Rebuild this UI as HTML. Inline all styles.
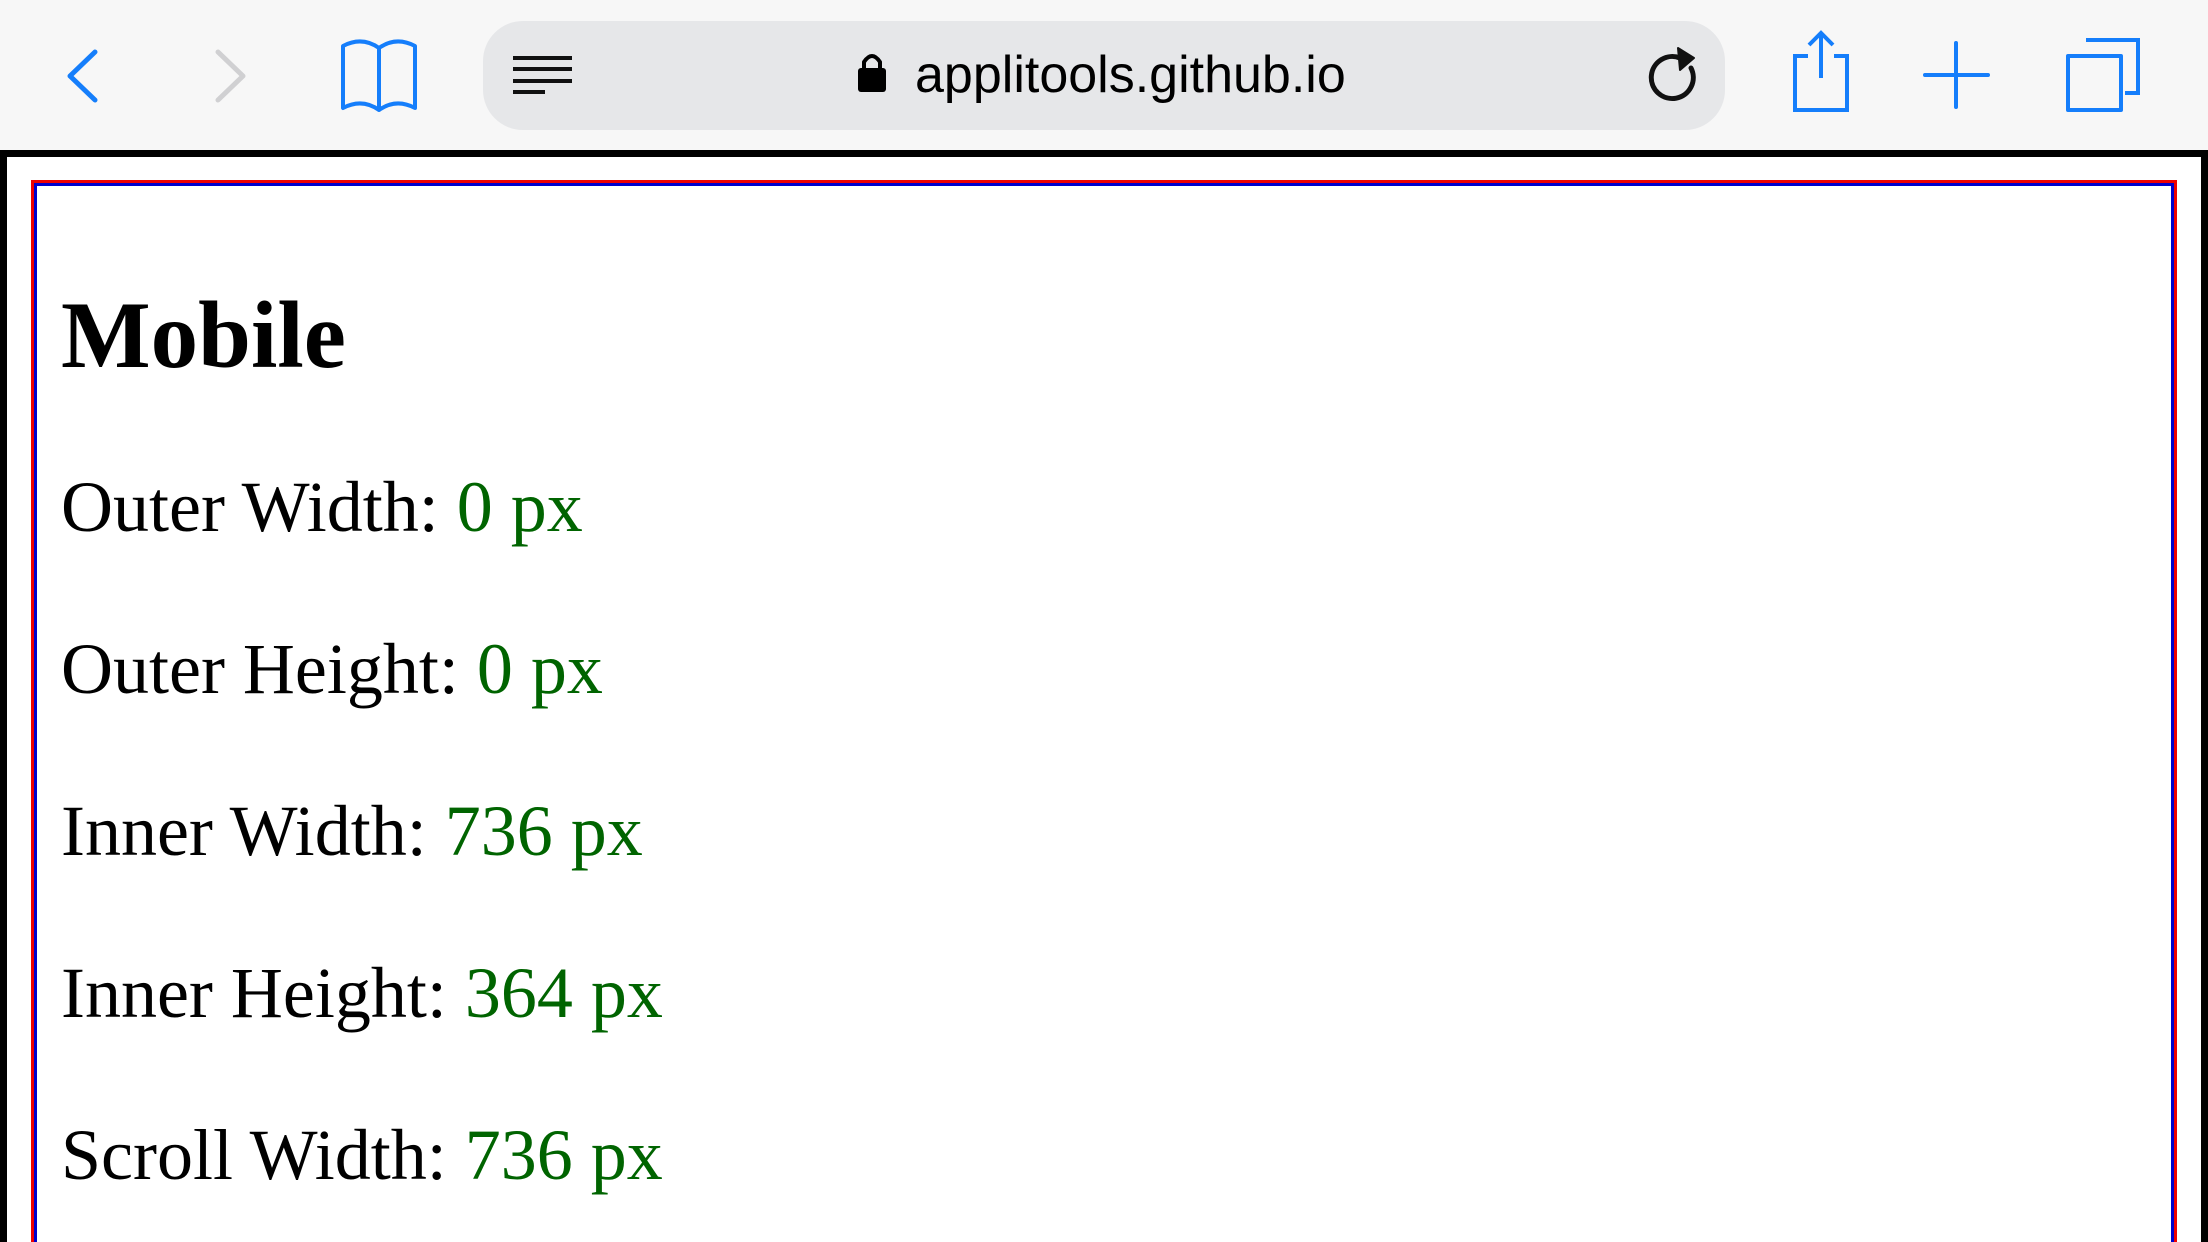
<!DOCTYPE html>
<html><head><meta charset="utf-8"><style>
html,body{margin:0;padding:0;width:2208px;height:1242px;overflow:hidden;background:#fff;position:relative}
.bar{position:absolute;left:0;top:0;width:2208px;height:150px;background:#f7f7f7}
.url{position:absolute;left:483px;top:21px;width:1242px;height:109px;border-radius:40px;background:#e6e7e9}
.frame{position:absolute;left:0;top:150px;width:2194px;height:1100px;border:7px solid #000;border-bottom:none}
.red{position:absolute;left:31px;top:180px;width:2140px;height:1100px;border:3px solid #e00;border-bottom:none}
.blue{position:absolute;left:34px;top:183px;width:2134px;height:1100px;border:3px solid #00c;border-bottom:none}
.t{position:absolute;left:61px;font-family:"Liberation Serif",serif;white-space:nowrap;line-height:1}
.h{font-weight:bold;font-size:95px}
.p{font-size:72px}
.g{color:#006400}
.u{position:absolute;left:915px;top:49px;font-family:"Liberation Sans",sans-serif;font-size:52px;color:#000;line-height:1}
</style></head><body>
<div class="bar"></div>
<div class="url"></div>
<svg width="2208" height="150" style="position:absolute;left:0;top:0" fill="none" stroke-linecap="round" stroke-linejoin="round">
<path d="M95 52 L70 76 L95 100" stroke="#157efb" stroke-width="5"/>
<path d="M218 52 L243 76 L218 100" stroke="#d0d0d2" stroke-width="5"/>
<path d="M343 46 Q362 36 379 48 Q396 36 415 46 L415 108 Q396 98 379 110 Q362 98 343 108 Z M379 48 L379 110" stroke="#157efb" stroke-width="4"/>
<path d="M513 58 H572 M513 69 H572 M513 81 H572 M513 92 H545" stroke="#111" stroke-width="4" stroke-linecap="butt"/>
<rect x="858" y="68" width="28" height="24" rx="3" fill="#000"/>
<path d="M864 68 V62 Q872 50 880 62 V68" stroke="#000" stroke-width="4"/>
<path d="M1691 68 A21 21 0 1 1 1680 58" stroke="#111" stroke-width="5"/>
<path d="M1678 48 L1694 58 L1680 70 Z" fill="#111" stroke="#111" stroke-width="2"/>
<path d="M1808 56 H1795 V110 H1847 V56 H1834 M1821 78 V33 M1809 45 L1821 33 L1833 45" stroke="#157efb" stroke-width="4" stroke-linecap="butt" stroke-linejoin="miter"/>
<path d="M1956 43 V107 M1925 75 H1988" stroke="#157efb" stroke-width="4"/>
<rect x="2068" y="56" width="53" height="54" stroke="#157efb" stroke-width="4"/>
<path d="M2086 40 H2138 V93 H2125" stroke="#157efb" stroke-width="4" stroke-linecap="butt" stroke-linejoin="miter"/>
</svg>
<div class="u">applitools.github.io</div>
<div class="frame"></div>
<div class="red"></div>
<div class="blue"></div>
<div class="t h" style="top:288px">Mobile</div>
<div class="t p" style="top:471px">Outer Width: <span class="g">0 px</span></div>
<div class="t p" style="top:633px">Outer Height: <span class="g">0 px</span></div>
<div class="t p" style="top:795px">Inner Width: <span class="g">736 px</span></div>
<div class="t p" style="top:957px">Inner Height: <span class="g">364 px</span></div>
<div class="t p" style="top:1119px">Scroll Width: <span class="g">736 px</span></div>
</body></html>
